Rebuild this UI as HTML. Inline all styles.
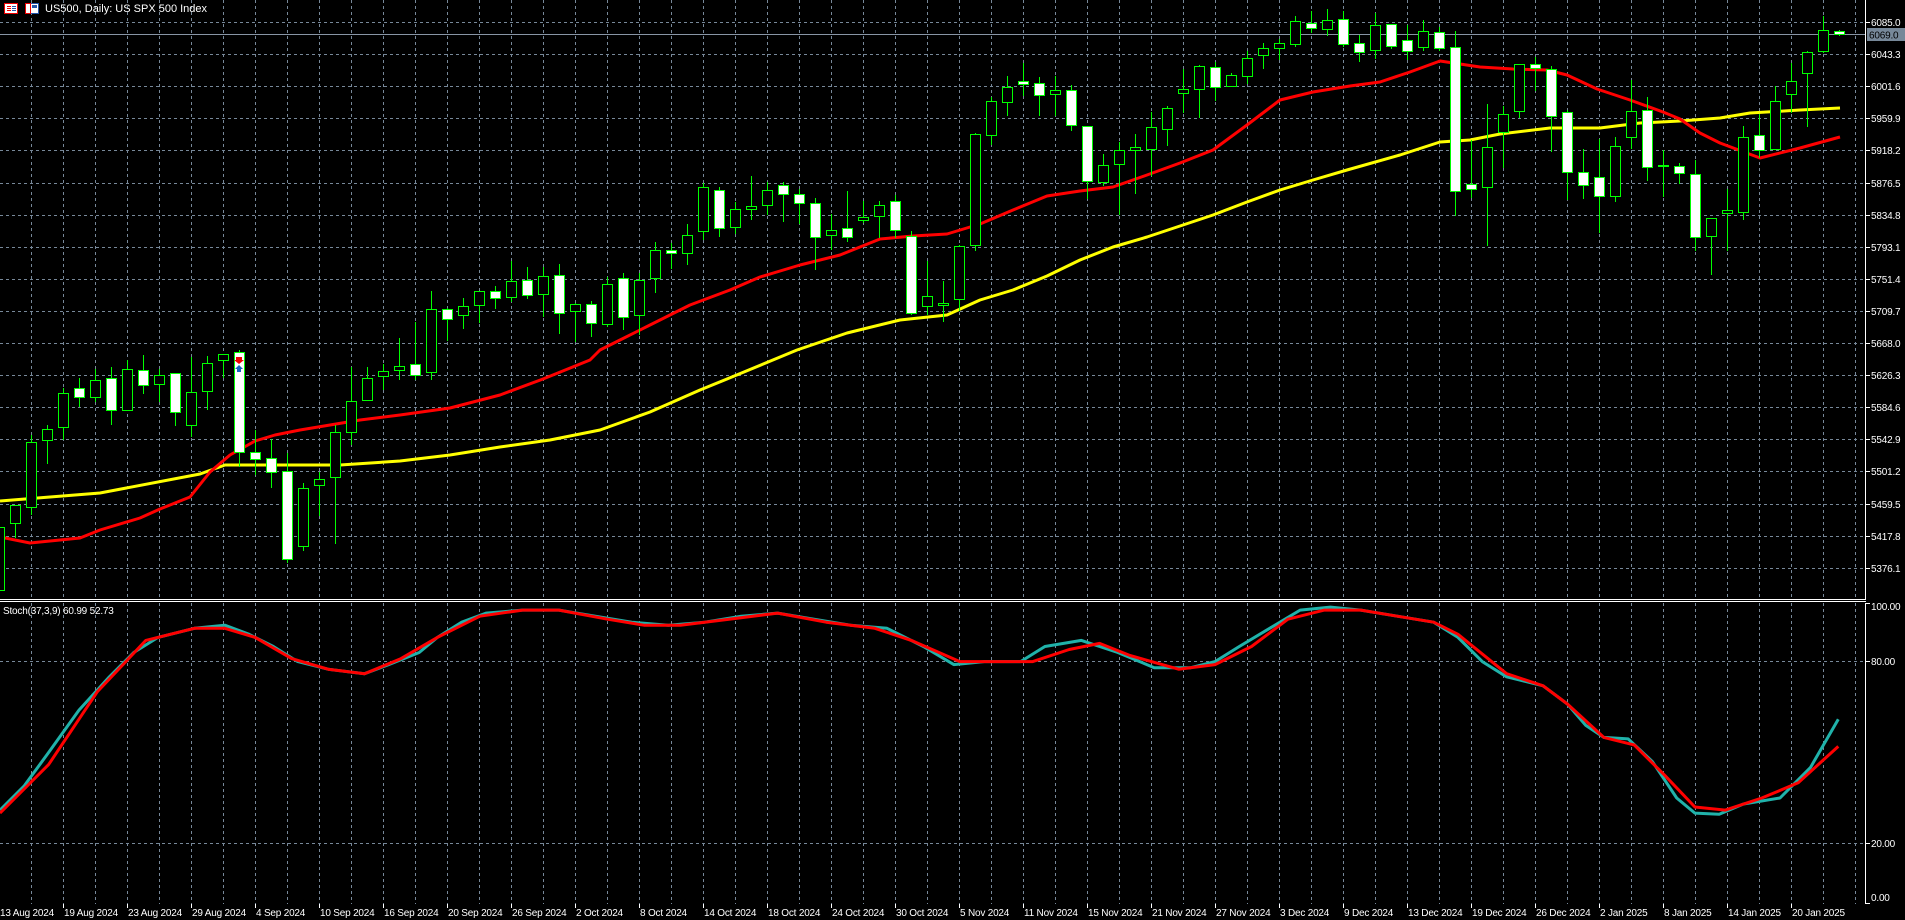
<!DOCTYPE html>
<html><head><meta charset="utf-8">
<style>
html,body{margin:0;padding:0;background:#000;width:1905px;height:920px;overflow:hidden}
svg{display:block}
text{font-family:"Liberation Sans",sans-serif;font-size:11px;fill:#fff}
text.s{font-size:10px;letter-spacing:-0.2px}
</style></head>
<body>
<svg id="s" width="1905" height="920" viewBox="0 0 1905 920" xmlns="http://www.w3.org/2000/svg">
<g id="grid" stroke="#778899" stroke-width="1" stroke-dasharray="3,3" fill="none"></g>
<line x1="0" y1="34.5" x2="1866" y2="34.5" stroke="#8895a5" stroke-width="1"/>
<g id="ma"></g>
<g id="candles"></g>
<g id="stoch"></g>
<line x1="0" y1="599.5" x2="1866" y2="599.5" stroke="#fff"/>
<line x1="0" y1="601.5" x2="1866" y2="601.5" stroke="#fff"/>
<line x1="1865.5" y1="0" x2="1865.5" y2="600" stroke="#fff"/>
<line x1="1865.5" y1="603" x2="1865.5" y2="904" stroke="#fff"/>
<g id="axis" stroke="#fff"></g>
<rect x="1867" y="28" width="38" height="13" fill="#778899"/>
<text class="s" x="1869" y="38.5" style="fill:#000">6069.0</text>
<rect x="4.5" y="3.5" width="13" height="10" fill="#fff" stroke="#e00"/>
<line x1="7" y1="6.5" x2="11" y2="6.5" stroke="#e00"/><line x1="7" y1="8.5" x2="11" y2="8.5" stroke="#e00"/><line x1="7" y1="10.5" x2="11" y2="10.5" stroke="#e00"/>
<line x1="12" y1="6.5" x2="16" y2="6.5" stroke="#25a"/><line x1="12" y1="8.5" x2="16" y2="8.5" stroke="#25a"/><line x1="12" y1="10.5" x2="16" y2="10.5" stroke="#25a"/>
<rect x="25.5" y="3.5" width="13" height="10" fill="#fff" stroke="#25a"/>
<rect x="25.5" y="3.5" width="5" height="10" fill="#fff" stroke="#e00"/>
<rect x="32" y="5" width="5" height="3" fill="#25a"/>
<text x="45" y="12">US500, Daily:  US SPX 500 Index</text>
<text class="s" x="3" y="614">Stoch(37,3,9) 60.99 52.73</text>
<g id="labels"></g>
<path d="M236 357h6v3h2l-5 4-5-4h2z" fill="#e00"/>
<path d="M239 365l-4 4h2v3h4v-3h2z" fill="#1565c0"/>
</svg>
<script>
var NS="http://www.w3.org/2000/svg";
function el(p,t,a,txt){var e=document.createElementNS(NS,t);for(var k in a)e.setAttribute(k,a[k]);if(txt!==undefined)e.textContent=txt;document.getElementById(p).appendChild(e);return e;}
for(var i=0;i<18;i++){var y=Math.round(22+32.1*i)+0.5;el("grid","line",{x1:0,y1:y,x2:1865,y2:y});}
[661.5,843.5].forEach(function(y){el("grid","line",{x1:0,y1:y,x2:1865,y2:y});});
for(var x=31;x<1865;x+=32){el("grid","line",{x1:x+.5,y1:0,x2:x+.5,y2:598});el("grid","line",{x1:x+.5,y1:603,x2:x+.5,y2:904});}
var pl=["6085.0","6043.3","6001.6","5959.9","5918.2","5876.5","5834.8","5793.1","5751.4","5709.7","5668.0","5626.3","5584.6","5542.9","5501.2","5459.5","5417.8","5376.1"];
pl.forEach(function(t,i){var y=Math.round(22+32.1*i);el("axis","line",{x1:1866,y1:y+.5,x2:1870,y2:y+.5});el("labels","text",{x:1871,y:y+4,"class":"s"},t);});
[["100.00",606,603],["80.00",661,661],["20.00",843,843],["0.00",897,903]].forEach(function(a){el("axis","line",{x1:1866,y1:a[2]+.5,x2:1870,y2:a[2]+.5});el("labels","text",{x:1871,y:a[1]+4,"class":"s"},a[0]);});
var dl=["13 Aug 2024","19 Aug 2024","23 Aug 2024","29 Aug 2024","4 Sep 2024","10 Sep 2024","16 Sep 2024","20 Sep 2024","26 Sep 2024","2 Oct 2024","8 Oct 2024","14 Oct 2024","18 Oct 2024","24 Oct 2024","30 Oct 2024","5 Nov 2024","11 Nov 2024","15 Nov 2024","21 Nov 2024","27 Nov 2024","3 Dec 2024","9 Dec 2024","13 Dec 2024","19 Dec 2024","26 Dec 2024","2 Jan 2025","8 Jan 2025","14 Jan 2025","20 Jan 2025"];
dl.forEach(function(t,i){var x=-1+64*i;el("axis","line",{x1:x+.5,y1:904,x2:x+.5,y2:908});el("labels","text",{x:Math.max(0,x+1),y:916,"class":"s"},t);});
var C=[[527,590,520,598,0],[505,523,505,538,0],[442,507,435,515,0],[429,440,425,464,0],[393,427,388,440,0],[388,397,378,407,1],[380,397,369,402,0],[378,410,367,425,1],[369,410,360,410,0],[370,385,355,394,1],
[375,384,369,402,0],[373,412,373,426,1],[392,425,357,437,0],[363,391,356,410,0],[354,360,354,378,0],[352,452,350,467,1],[452,459,430,475,1],[458,472,439,488,1],[471,559,453,563,1],[488,546,483,551,0],
[479,485,472,516,0],[432,477,425,544,0],[401,432,367,445,0],[378,400,367,400,0],[371,376,364,390,0],[366,370,338,380,0],[364,375,322,380,1],[309,372,291,380,0],[309,319,308,341,1],[306,315,298,329,0],
[291,305,291,323,0],[291,298,286,309,1],[281,297,261,302,0],[280,295,267,299,1],[276,294,267,317,0],[275,313,264,334,1],[304,311,303,342,0],[304,323,301,337,1],[284,324,277,327,0],[278,317,273,330,1],
[280,315,273,335,0],[250,278,242,293,0],[250,253,243,269,1],[235,253,224,265,0],[187,231,183,240,0],[190,228,187,237,1],[209,227,202,234,0],[206,209,176,220,0],[190,205,182,215,0],[185,194,182,222,1],
[194,203,189,224,1],[203,237,198,270,1],[230,235,214,250,0],[228,237,191,242,1],[217,220,201,223,0],[205,216,201,238,0],[201,230,195,238,1],[236,313,231,315,1],[296,306,261,315,0],[303,305,281,322,0],
[246,299,245,311,0],[134,245,133,251,0],[101,135,97,145,0],[87,102,76,116,0],[81,84,63,96,1],[83,95,77,116,1],[90,94,76,116,0],[90,125,85,131,1],[126,181,126,199,1],[165,182,154,186,0],
[150,164,142,215,0],[147,150,134,194,0],[127,149,112,176,0],[108,129,106,146,0],[89,93,69,113,0],[66,89,65,118,0],[67,87,62,101,1],[75,86,73,86,0],[58,76,51,84,0],[48,55,43,69,0],
[43,48,39,60,0],[21,44,16,47,0],[23,28,11,33,1],[20,29,9,36,0],[19,44,11,47,1],[43,52,35,62,1],[25,50,13,59,0],[24,46,24,49,1],[40,51,25,60,1],[31,47,20,51,0],
[32,48,27,51,1],[47,191,31,216,1],[184,189,140,198,1],[147,187,104,246,0],[114,132,106,168,0],[64,111,64,118,0],[64,68,57,91,1],[69,116,66,152,1],[112,172,110,200,1],[172,185,149,199,1],
[177,196,139,233,1],[146,196,137,202,0],[111,137,80,149,0],[110,167,97,181,1],[165,166,150,197,0],[166,173,163,184,1],[174,237,160,251,1],[218,236,218,275,0],[210,213,189,251,0],[137,212,126,220,0],
[135,150,114,158,1],[101,149,86,150,0],[81,94,63,113,0],[52,73,51,127,0],[30,51,16,53,0],[31,34,30,36,1]];
C.forEach(function(c,k){var cx=16*k-1;
el("candles","line",{x1:cx+.5,y1:c[2],x2:cx+.5,y2:c[3],stroke:"#00ff00","stroke-width":1});
var h=Math.max(1,c[1]-c[0]);
el("candles","rect",{x:cx-4.5,y:c[0]+.5,width:10,height:h,fill:c[4]?"#fff":"#000",stroke:"#00ff00","stroke-width":1});});
function poly(g,pts,col,w){el(g,"polyline",{points:pts.map(function(p){return p.join(",")}).join(" "),fill:"none",stroke:col,"stroke-width":w,"stroke-linejoin":"round"});}
var Y=[[0,501],[100,493],[200,474],[225,465],[340,465],[400,461],[450,455],[500,447],[550,440],[600,430],[650,412],[700,390],[727,379],[797,350],[847,333],[900,320],[947,315],[980,300],[1013,290],[1047,276],[1080,260],[1113,247],[1147,237],[1180,226],[1213,215],[1247,202],[1280,190],[1313,180],[1347,170],[1400,155],[1440,142],[1470,140],[1500,134],[1550,128],[1600,128],[1640,123],[1680,121],[1720,118],[1750,113],[1800,110],[1840,108]];
var R=[[0,537],[30,543],[60,540],[80,538],[100,530],[140,518],[160,509],[190,497],[210,472],[230,455],[255,441],[275,435],[300,430],[330,425],[360,420],[400,415],[450,408],[500,395],[543,379],[590,360],[600,350],[620,340],[650,325],[690,305],[730,290],[760,277],[800,265],[840,255],[880,239],[913,236],[947,234],[980,224],[1013,210],[1047,196],[1080,191],[1113,187],[1147,175],[1180,163],[1213,150],[1247,125],[1280,100],[1313,92],[1350,86],[1380,82],[1410,72],[1440,61],[1480,67],[1513,69],[1547,70],[1567,75],[1597,89],[1630,100],[1663,112],[1680,119],[1700,133],[1720,143],[1760,158],[1800,148],[1840,137]];
poly("ma",Y,"#ffff00",3);poly("ma",R,"#ff0000",3);
var T=[[0,31],[20,39],[40,50],[65,64],[90,75],[110,83],[130,88],[160,91],[185,92],[205,89],[225,85],[245,80],[270,77.5],[300,76],[320,79],[345,83],[360,88],[380,93],[400,96],[430,97],[460,97],[490,95],[520,93],[550,92],[580,93],[610,95],[640,96],[670,94],[700,92],[730,91],[760,85],[785,79],[810,80],[840,80],[860,85],[890,87],[920,83],[950,78],[980,78],[1000,80],[1020,85],[1045,91],[1070,97],[1095,98],[1120,97],[1150,95],[1180,93],[1200,88],[1220,80],[1240,75],[1270,72],[1290,66],[1305,59],[1320,55],[1340,54.5],[1360,47],[1380,35],[1395,30],[1415,29.6],[1435,33],[1465,35],[1490,45],[1513,61]];
var S=[[0,30],[40,46],[80,70],[120,87],[160,91],[185,91],[210,88],[240,81],[270,77.5],[300,76],[330,81],[360,88],[395,95],[430,97],[460,97],[500,94],[530,92],[560,92],[600,94],[640,96],[680,93],[720,91],[750,87],[790,80],[820,80],[850,80],[880,84],[905,86],[930,82],[970,77.5],[1000,79],[1030,85],[1060,94],[1090,97],[1120,97],[1150,95],[1180,93],[1200,89],[1240,76],[1270,72],[1290,66],[1320,55],[1345,52.5],[1370,42.5],[1395,32],[1420,31],[1450,35],[1480,40],[1513,52]];
function tr(a){return a.map(function(p){return [(p[0]*1.215).toFixed(1),(904-3.03*p[1]).toFixed(1)];});}
poly("stoch",tr(T),"#20b2aa",3);poly("stoch",tr(S),"#ff0000",3);
</script>
</body></html>
